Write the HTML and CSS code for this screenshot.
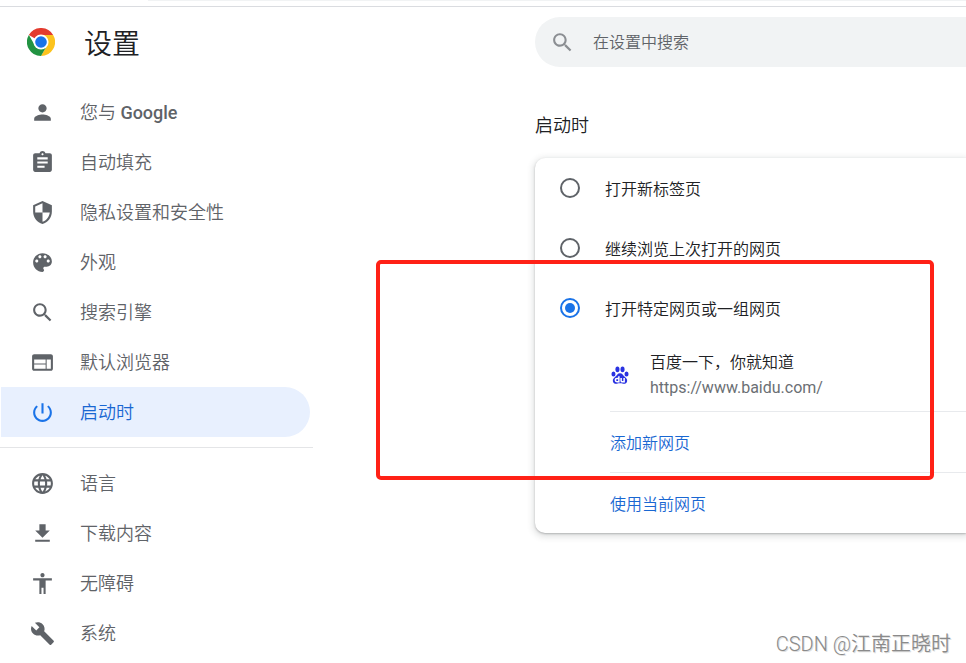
FILE: index.html
```html
<!DOCTYPE html>
<html lang="zh-CN">
<head>
    <meta charset="UTF-8">
    <meta name="viewport" content="width=device-width, initial-scale=1.0">
    <title>设置</title>
    <link rel="stylesheet" href="styles.css">
</head>
<body>
    <div class="toolbar"></div>
    <div class="page">
        <aside class="sidebar">
            <div class="brand">
                <svg class="logo" viewBox="0 0 48 48" aria-hidden="true">
                    <path fill="#e33b2e" d="M24 24 3.2 12A24 24 0 0 1 44.8 12H24z"/>
                    <path fill="#fcc31e" d="M24 12h20.8A24 24 0 0 1 24 48l10.4-18z"/>
                    <path fill="#229342" d="M34.4 30 24 48A24 24 0 0 1 3.2 12l10.4 18L24 36z"/>
                    <circle cx="24" cy="24" r="13" fill="#fff"/>
                    <circle cx="24" cy="24" r="10" fill="#1a73e8"/>
                </svg>
                <h1>设置</h1>
            </div>
            <nav>
                <a class="item" href="#people">
                    <svg viewBox="0 0 24 24"><path d="M12 12c2.21 0 4-1.79 4-4s-1.79-4-4-4-4 1.79-4 4 1.790 4 4 4zm0 2c-2.670 0-8 1.340-8 4v2h16v-2c0-2.660-5.330-4-8-4z"/></svg>
                    <span>您与 <b>Google</b></span>
                </a>
                <a class="item" href="#autofill">
                    <svg viewBox="0 0 24 24"><path d="M19 3h-4.180C14.400 1.840 13.300 1 12 1c-1.300 0-2.400.84-2.820 2H5c-1.100 0-2 .9-2 2v14c0 1.100.9 2 2 2h14c1.100 0 2-.9 2-2V5c0-1.100-.9-2-2-2zm-7 0c.55 0 1 .45 1 1s-.45 1-1 1-1-.45-1-1 .45-1 1-1zm2 14H7v-2h7v2zm3-4H7v-2h10v2zm0-4H7V7h10v2z"/></svg>
                    <span>自动填充</span>
                </a>
                <a class="item" href="#privacy">
                    <svg viewBox="0 0 24 24"><path d="M12 1 3 5v6c0 5.550 3.840 10.740 9 12 5.160-1.260 9-6.450 9-12V5l-9-4zm0 10.990h7c-.53 4.120-3.280 7.790-7 8.940V12H5V6.300l7-3.110v8.800z"/></svg>
                    <span>隐私设置和安全性</span>
                </a>
                <a class="item" href="#appearance">
                    <svg viewBox="0 0 24 24"><path d="M12 3c-4.970 0-9 4.030-9 9s4.030 9 9 9c.83 0 1.500-.67 1.500-1.500 0-.39-.15-.74-.39-1.010-.23-.26-.38-.61-.38-.99 0-.83.67-1.500 1.500-1.500H16c2.760 0 5-2.240 5-5 0-4.420-4.030-8-9-8zm-5.500 9c-.83 0-1.500-.67-1.500-1.500S5.670 9 6.500 9 8 9.670 8 10.500 7.330 12 6.500 12zm3-4C8.670 8 8 7.330 8 6.500S8.670 5 9.500 5s1.500.67 1.500 1.500S10.330 8 9.500 8zm5 0c-.83 0-1.500-.67-1.500-1.500S13.670 5 14.500 5s1.500.67 1.500 1.500S15.330 8 14.500 8zm3 4c-.83 0-1.500-.67-1.500-1.500S16.670 9 17.500 9s1.500.67 1.500 1.500-.67 1.500-1.500 1.500z"/></svg>
                    <span>外观</span>
                </a>
                <a class="item" href="#search">
                    <svg viewBox="0 0 24 24"><path d="M15.500 14h-.79l-.28-.27C15.410 12.590 16 11.110 16 9.500 16 5.910 13.090 3 9.500 3S3 5.910 3 9.500 5.910 16 9.500 16c1.610 0 3.090-.59 4.230-1.570l.27.28v.79l5 4.990L20.490 19l-4.990-5zm-6 0C7.010 14 5 11.990 5 9.500S7.010 5 9.500 5 14 7.010 14 9.500 11.990 14 9.500 14z"/></svg>
                    <span>搜索引擎</span>
                </a>
                <a class="item" href="#default-browser">
                    <svg viewBox="0 0 24 24"><path d="M20 4H4c-1.100 0-1.990.9-1.990 2L2 18c0 1.100.9 2 2 2h16c1.100 0 2-.9 2-2V6c0-1.100-.9-2-2-2zm-5 14H4v-4h11v4zm0-5H4V9h11v4zm5 5h-4V9h4v9z"/></svg>
                    <span>默认浏览器</span>
                </a>
                <a class="item selected" href="#on-startup" aria-current="page">
                    <svg viewBox="0 0 24 24"><path d="M13 3h-2v10h2V3zm4.830 2.170-1.420 1.420C17.990 7.860 19 9.810 19 12c0 3.870-3.130 7-7 7s-7-3.130-7-7c0-2.190 1.010-4.140 2.580-5.420L6.170 5.170C4.230 6.820 3 9.260 3 12c0 4.970 4.030 9 9 9s9-4.030 9-9c0-2.740-1.230-5.180-3.170-6.830z"/></svg>
                    <span>启动时</span>
                </a>
                <hr>
                <a class="item" href="#languages">
                    <svg viewBox="0 0 24 24"><path d="M11.990 2C6.470 2 2 6.480 2 12s4.470 10 9.990 10C17.520 22 22 17.520 22 12S17.520 2 11.990 2zm6.930 6h-2.950c-.32-1.250-.78-2.450-1.380-3.560 1.840.63 3.370 1.910 4.330 3.560zM12 4.040c.83 1.200 1.480 2.530 1.910 3.960h-3.820c.43-1.430 1.080-2.760 1.910-3.960zM4.260 14C4.100 13.360 4 12.690 4 12s.1-1.360.26-2h3.380c-.08.66-.14 1.320-.14 2s.06 1.340.14 2H4.260zm.82 2h2.950c.32 1.250.78 2.450 1.380 3.560-1.840-.63-3.370-1.900-4.330-3.560zm2.950-8H5.080c.96-1.660 2.490-2.930 4.330-3.560C8.810 5.550 8.350 6.750 8.030 8zM12 19.960c-.83-1.200-1.480-2.530-1.910-3.960h3.820c-.43 1.430-1.080 2.760-1.910 3.960zM14.340 14H9.660c-.09-.66-.16-1.320-.16-2s.07-1.350.16-2h4.680c.09.65.16 1.320.16 2s-.07 1.340-.16 2zm.25 5.560c.6-1.110 1.060-2.310 1.380-3.560h2.950c-.96 1.650-2.490 2.930-4.330 3.560zM16.360 14c.08-.66.14-1.320.14-2s-.06-1.340-.14-2h3.380c.16.64.26 1.310.26 2s-.1 1.360-.26 2h-3.380z"/></svg>
                    <span>语言</span>
                </a>
                <a class="item" href="#downloads">
                    <svg viewBox="0 0 24 24"><path d="M19 9h-4V3H9v6H5l7 7 7-7zM5 18v2h14v-2H5z"/></svg>
                    <span>下载内容</span>
                </a>
                <a class="item" href="#accessibility">
                    <svg viewBox="0 0 24 24"><path d="M12 2c1.100 0 2 .9 2 2s-.9 2-2 2-2-.9-2-2 .9-2 2-2zm9 7h-6v13h-2v-6h-2v6H9V9H3V7h18v2z"/></svg>
                    <span>无障碍</span>
                </a>
                <a class="item" href="#system">
                    <svg viewBox="0 0 24 24"><path d="m22.700 19-9.100-9.100c.9-2.300.4-5-1.500-6.900-2-2-5-2.400-7.400-1.300L9 6 6 9 1.600 4.700C.4 7.100.9 10.100 2.900 12.100c1.900 1.900 4.600 2.400 6.900 1.500l9.100 9.100c.4.4 1 .4 1.400 0l2.300-2.300c.5-.4.5-1.100.1-1.400z"/></svg>
                    <span>系统</span>
                </a>
            </nav>
        </aside>

        <main>
            <label class="search">
                <svg viewBox="0 0 24 24" aria-hidden="true"><path d="M15.500 14h-.79l-.28-.27C15.410 12.590 16 11.110 16 9.500 16 5.910 13.090 3 9.500 3S3 5.910 3 9.500 5.910 16 9.500 16c1.610 0 3.090-.59 4.230-1.570l.27.28v.79l5 4.990L20.490 19l-4.990-5zm-6 0C7.010 14 5 11.990 5 9.500S7.010 5 9.500 5 14 7.010 14 9.500 11.990 14 9.500 14z"/></svg>
                <input type="search" placeholder="在设置中搜索" aria-label="在设置中搜索">
            </label>
            <h2>启动时</h2>
            <section class="card">
                <label class="option"><input type="radio" name="startup">打开新标签页</label>
                <label class="option"><input type="radio" name="startup">继续浏览上次打开的网页</label>
                <label class="option"><input type="radio" name="startup" checked>打开特定网页或一组网页</label>
                <div class="pages">
                    <div class="site">
                        <svg class="favicon" viewBox="0 0 24 24" aria-hidden="true">
                            <ellipse cx="3.300" cy="10.600" rx="2.700" ry="3.400"/>
                            <ellipse cx="8.600" cy="4.500" rx="2.700" ry="3.700"/>
                            <ellipse cx="15.400" cy="4.500" rx="2.700" ry="3.700"/>
                            <ellipse cx="20.700" cy="10.600" rx="2.700" ry="3.400"/>
                            <path d="M12 9.500c-3.200 0-4.200 3-6.300 4.900-2 1.700-3.700 3.300-3.200 5.800.6 3 3 3.600 5.300 3.300 1.600-.2 2.800-.4 4.200-.4s2.600.2 4.200.4c2.300.3 4.700-.3 5.300-3.300.5-2.500-1.200-4.100-3.200-5.800-2.100-1.900-3.100-4.900-6.300-4.900z"/>
                            <path class="mark" d="M10.500 13.500v7.500H8a2 2 0 0 1 0-4.500h2.500M13.500 16v3.500q0 1.500 1.500 1.500h2.500v-5"/>
                        </svg>
                        <div>
                            <div class="title">百度一下，你就知道</div>
                            <div class="url">https://www.baidu.com/</div>
                        </div>
                    </div>
                    <a class="action" href="#add">添加新网页</a>
                    <a class="action" href="#current">使用当前网页</a>
                </div>
                <div class="highlight"></div>
            </section>
        </main>
    </div>
    <div class="watermark">CSDN @江南正晓时</div>
</body>
</html>
```

FILE: styles.css
```css
* {
    box-sizing: border-box;
}
body {
    position: relative;
    margin: 0;
    min-height: 100vh;
    overflow: hidden;
    background: #fff;
    color: #202124;
    font-family: Roboto, "Noto Sans CJK SC", sans-serif;
    font-size: 16px;
    font-weight: 350;
}
a {
    text-decoration: none;
}
.toolbar {
    height: 7px;
    border-bottom: 1px solid #dadce0;
}
.toolbar::before {
    content: "";
    display: block;
    height: 1px;
    margin-left: 148px;
    background: #f1f3f4;
}
.page {
    display: grid;
    grid-template-columns: 313px 1fr;
    column-gap: 222px;
}

/* sidebar */
.brand {
    display: flex;
    align-items: center;
    gap: 29px;
    height: 70px;
    padding-left: 27px;
}
.logo {
    width: 28px;
    height: 28px;
}
h1 {
    margin: 0;
    font-size: 28px;
    font-weight: 350;
}
nav {
    padding-top: 10px;
}
.item {
    display: flex;
    align-items: center;
    gap: 25px;
    height: 50px;
    margin: 0 3px 0 1px;
    padding-left: 29px;
    border-radius: 0 25px 25px 0;
    color: #5f6368;
    font-size: 18px;
}
.item b {
    font-weight: 500;
}
.item svg {
    width: 25px;
    height: 25px;
    fill: currentColor;
}
.item span {
    padding-bottom: 2px;
}
.item.selected {
    background: #e8f0fe;
    color: #1967d2;
}
.item.selected svg {
    fill: #1a73e8;
}
hr {
    height: 1px;
    margin: 10px 0;
    border: 0;
    background: #e4e5e7;
}

/* main content */
main {
    padding-top: 10px;
}
.search {
    display: flex;
    align-items: center;
    gap: 18px;
    height: 50px;
    padding-left: 15px;
    border-radius: 25px 0 0 25px;
    background: #f1f3f4;
}
.search svg {
    flex: none;
    width: 25px;
    height: 25px;
    fill: #8b8e92;
}
.search input {
    flex: 1;
    min-width: 0;
    padding: 0;
    border: 0;
    outline: 0;
    background: none;
    font: inherit;
}
.search input::placeholder {
    color: #5f6368;
}
h2 {
    margin: 46px 0 19px;
    font-size: 18px;
    font-weight: 350;
    line-height: 26px;
}
.card {
    position: relative;
    border-radius: 10px 0 0 10px;
    box-shadow: 0 1px 2px rgba(60, 64, 67, 0.3), 0 2px 6px 2px rgba(60, 64, 67, 0.15);
}
.option {
    display: flex;
    align-items: center;
    gap: 25px;
    height: 60px;
    padding-left: 25px;
}
.option input {
    appearance: none;
    width: 20px;
    height: 20px;
    margin: 0;
    border: 2px solid #5f6368;
    border-radius: 50%;
}
.option input:checked {
    padding: 3px;
    border-color: #1a73e8;
    background: #1a73e8 content-box;
}
.pages {
    padding-left: 75px;
}
.site {
    display: flex;
    align-items: center;
    gap: 20px;
    height: 73px;
    line-height: 25px;
}
.favicon {
    width: 20px;
    height: 20px;
    padding: 1px;
    fill: #2932e1;
}
.favicon .mark {
    fill: none;
    stroke: #fff;
    stroke-width: 2;
}
.url {
    color: #6b6f74;
    font-weight: 400;
}
.action {
    display: flex;
    align-items: center;
    height: 61px;
    border-top: 1px solid #e8eaed;
    color: #1967d2;
}
.highlight {
    position: absolute;
    top: 102px;
    left: -159px;
    width: 558px;
    height: 220px;
    border: 4px solid #ff2116;
    border-radius: 5px;
    pointer-events: none;
}
.watermark {
    position: absolute;
    right: 15px;
    bottom: 4px;
    color: #8a8a8a;
    font-size: 20px;
    line-height: 30px;
    text-shadow: 1px 1px 0 #e0e0e0;
}
```
